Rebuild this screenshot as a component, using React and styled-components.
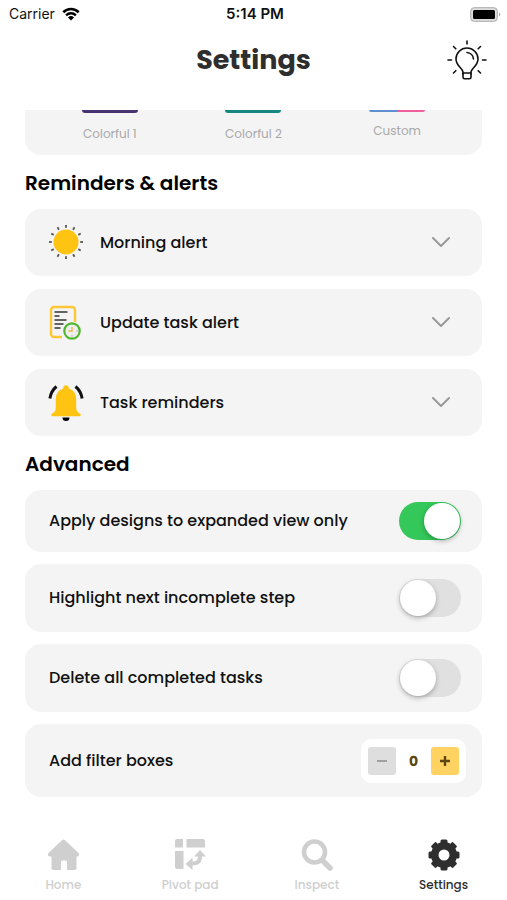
import React, { useState } from "react";
import styled, { createGlobalStyle } from "styled-components";

const GlobalStyle = createGlobalStyle`
  * {
    box-sizing: border-box;
  }
  body {
    margin: 0;
    background: #fff;
    color: #111;
    font-family: Poppins, Inter, sans-serif;
  }
  button {
    font-family: inherit;
    color: inherit;
    border: none;
    padding: 0;
    cursor: pointer;
  }
`;

const Page = styled.div`
  min-height: 100vh;
  display: flex;
  flex-direction: column;
`;

const StatusBar = styled.div`
  display: grid;
  grid-template-columns: 1fr auto 1fr;
  align-items: center;
  height: 28px;
  padding: 0 6px 0 9px;
  font-family: Inter, sans-serif;
  font-size: 14px;
  line-height: 20px;
`;

const Carrier = styled.div`
  display: flex;
  align-items: center;
  gap: 7px;
`;

const Time = styled.time`
  font-size: 15px;
  font-weight: 600;
`;

const Battery = styled.svg`
  justify-self: end;
`;

const Header = styled.header`
  display: grid;
  grid-template-columns: 40px 1fr 40px;
  align-items: center;
  height: 82px;
  padding: 0 20px 18px;
`;

const Title = styled.h1`
  grid-column: 2;
  margin: 0;
  text-align: center;
  font-size: 27px;
  line-height: 36px;
  font-weight: 700;
  color: #2e2e2e;
`;

const TipsButton = styled.button`
  background: none;
  height: 40px;
`;

const Content = styled.main`
  flex: 1;
  padding: 0 25px;
`;

const Themes = styled.div`
  display: grid;
  grid-template-columns: repeat(3, 1fr);
  height: 45px;
  padding: 0 13px;
  background: #f4f4f4;
  border-radius: 0 0 16px 16px;
`;

const Theme = styled.div`
  display: flex;
  flex-direction: column;
  align-items: center;
  gap: ${({ $raised }) => ($raised ? 10 : 12)}px;
  font-size: 12px;
  line-height: 18px;
  color: #a9a9a9;
`;

const Swatch = styled.div`
  width: 56px;
  height: ${({ $raised }) => ($raised ? 2 : 3)}px;
  border-radius: 0 0 8px 8px;
  background: ${({ $fill }) => $fill};
`;

const SectionTitle = styled.h2`
  margin: 14px 0 12px;
  font-size: 20px;
  line-height: 28px;
  font-weight: 600;
  color: #000;
`;

const Stack = styled.div`
  display: flex;
  flex-direction: column;
  gap: ${({ $gap }) => $gap}px;
`;

const AlertRow = styled.button`
  display: flex;
  align-items: center;
  gap: 16px;
  width: 100%;
  height: 67px;
  && {
    padding: 0 31px 0 23px;
  }
  background: #f4f4f4;
  border-radius: 16px;
  font-size: 16px;
  line-height: 24px;
  font-weight: 500;
  text-align: left;
`;

const RowText = styled.span`
  flex: 1;
`;

const OptionRow = styled.div`
  display: flex;
  align-items: center;
  justify-content: space-between;
  min-height: ${({ $height }) => $height}px;
  padding: 0 ${({ $inset }) => $inset}px 0 24px;
  background: #f4f4f4;
  border-radius: 16px;
  font-size: 16px;
  line-height: 24px;
  font-weight: 500;
`;

const Switch = styled.input`
  appearance: none;
  flex: none;
  width: 62px;
  height: 38px;
  margin: 0;
  padding: 1px;
  border-radius: 19px;
  background: #e0e0e0;
  display: flex;
  cursor: pointer;
  &::before {
    content: "";
    width: 36px;
    height: 36px;
    border-radius: 50%;
    background: #fff;
    box-shadow: 0 2px 5px rgba(0, 0, 0, 0.28);
  }
  &:checked {
    background: #34c759;
    justify-content: flex-end;
  }
`;

const Stepper = styled.div`
  display: flex;
  align-items: center;
  padding: 8px 7px;
  background: #fff;
  border-radius: 10px;
`;

const StepButton = styled.button`
  display: flex;
  align-items: center;
  justify-content: center;
  width: 28px;
  height: 28px;
  border-radius: 3px;
  background: ${({ $primary }) => ($primary ? "#ffd262" : "#dedede")};
  color: ${({ $primary }) => ($primary ? "#5c4712" : "#a0a0a0")};
`;

const Count = styled.output`
  width: 35px;
  text-align: center;
  font-size: 14px;
  font-weight: 700;
  color: #5c4712;
`;

const TabBar = styled.nav`
  display: grid;
  grid-template-columns: repeat(4, 1fr);
  padding: 23px 0 6px;
`;

const Tab = styled.a`
  display: flex;
  flex-direction: column;
  align-items: center;
  gap: 5px;
  font-size: 12px;
  line-height: 18px;
  font-weight: 500;
  text-decoration: none;
  color: ${({ $active }) => ($active ? "#2e2e2e" : "#cfcfcf")};
`;

const WifiIcon = () => (
  <svg width="18" height="14" viewBox="0 0 18 14">
    <path d="M1.3 5.2a11 11 0 0 1 15.4 0" fill="none" stroke="#000" strokeWidth="2.6" />
    <path d="M4.1 8.3a7 7 0 0 1 9.8 0" fill="none" stroke="#000" strokeWidth="2.4" />
    <path d="M9 13.6 6 10.5a4.3 4.3 0 0 1 6 0z" />
  </svg>
);

const BulbIcon = () => (
  <svg width="40" height="40" viewBox="0 0 40 40" fill="none" stroke="#111" strokeWidth="1.6" strokeLinecap="round" strokeLinejoin="round">
    <path d="M16 34v-2c0-3.5-7-6-7-13a11 11 0 0 1 22 0c0 7-7 9.5-7 13v2" />
    <path d="M16 33h8v4.2a1.5 1.5 0 0 1-1.5 1.5h-5a1.5 1.5 0 0 1-1.5-1.5z" />
    <path d="M20 12.5a7 7 0 0 1 6.5 6.5" />
    <path d="M20 1v3M1 20h3.5M35.5 20H39M6.5 6.5l2.3 2.3M33.5 6.5l-2.3 2.3M6.5 33l2.3-2.3M33.5 33l-2.3-2.3" />
  </svg>
);

const SunIcon = () => (
  <svg width="36" height="36" viewBox="0 0 36 36">
    <circle cx="18" cy="17" r="12.5" fill="#ffc411" />
    {[...Array(12)].map((_, i) => (
      <path key={i} d="M18 0v2.8" stroke="#555" strokeWidth="1.8" transform={`rotate(${i * 30} 18 17)`} />
    ))}
  </svg>
);

const TaskIcon = () => (
  <svg width="36" height="36" viewBox="0 0 36 36" fill="none">
    <path d="M14 32H6a3 3 0 0 1-3-3V5a3 3 0 0 1 3-3h18a3 3 0 0 1 3 3v12" stroke="#ffc736" strokeWidth="2.4" />
    <path d="M6.5 7h13M6.5 11h5M6.5 15h12M6.5 19h9M6.5 23h6" stroke="#333" strokeWidth="1.6" />
    <circle cx="24" cy="26" r="9.6" fill="#f4f4f4" />
    <circle cx="24" cy="26" r="7.7" fill="#eee" stroke="#51b72f" strokeWidth="2.2" />
    <path d="M24 22v4h-3.5" stroke="#f3b340" strokeWidth="1.3" />
    <path d="M28.5 26h1M24 30.5v1" stroke="#888" />
  </svg>
);

const BellIcon = () => (
  <svg width="36" height="36" viewBox="0 0 36 36">
    <path d="M18 .2a2.8 2.8 0 0 1 2.8 3.3c4.7 1.4 7.4 5.4 7.4 11v8c0 3.5 1.5 5 4.3 6.500.8 1.200 0 2.300-1.500 2.300H5c-1.5 0-2.3-1.1-1.5-2.3 2.8-1.5 4.3-3 4.3-6.5v-8c0-5.600 2.700-9.600 7.400-11A2.8 2.8 0 0 1 18 .2z" fill="#ffc411" />
    <path d="M14.500 32.500h7a3.500 3.500 0 0 1-7 0z" />
    <path d="M8.500 1.500Q3 6 1.900 13.500M27.500 1.500Q33 6 34.100 13.500" fill="none" stroke="#111" strokeWidth="3" />
  </svg>
);

const Chevron = () => (
  <svg width="20" height="12" viewBox="0 0 20 12">
    <path d="m2 1 8 8 8-8" fill="none" stroke="#999" strokeWidth="2" strokeLinecap="round" strokeLinejoin="round" />
  </svg>
);

const HomeIcon = () => (
  <svg width="32" height="32" viewBox="0 0 32 32" fill="currentColor">
    <path d="M15.200 1a2 2 0 0 1 2.600 0L31.500 14c1 1.400.4 3.500-1.200 3.500H29.500V29a2 2 0 0 1-2 2H20V23a1.500 1.500 0 0 0-1.500-1.500h-3a1.500 1.500 0 0 0-1.500 1.500v8H6.500a2 2 0 0 1-2-2V17.500H2.700c-1.600 0-2.200-2.100-1.200-3.500z" />
  </svg>
);

const PivotIcon = () => (
  <svg width="32" height="32" viewBox="0 0 32 32" fill="currentColor">
    <path d="M3 0h6v8.5H1V2a2 2 0 0 1 2-2zM12.5 0H29a2 2 0 0 1 2 2v6.5H12.5zM1 12h8.5v18H3a2 2 0 0 1-2-2z" />
    <path d="M26 11l6 6.5h-4c0 6-3 9-9.500 9v4.500L11.500 25l7-6.500v4c4 0 5.500-1.500 5.500-5h-4z" />
  </svg>
);

const SearchIcon = () => (
  <svg width="32" height="32" viewBox="0 0 32 32" fill="none" stroke="currentColor">
    <circle cx="13.5" cy="13" r="10.5" strokeWidth="4.6" />
    <path d="m21.5 21.5 7.500 7.500" strokeWidth="5.5" strokeLinecap="round" />
  </svg>
);

const GearIcon = () => (
  <svg width="32" height="32" viewBox="0 0 32 32">
    <g fill="currentColor">
      {[0, 45, 90, 135].map((angle) => (
        <rect key={angle} x="12.5" y="0.5" width="7" height="31" rx="1.5" transform={`rotate(${angle} 16 16)`} />
      ))}
      <circle cx="16" cy="16" r="13" />
    </g>
    <circle cx="16" cy="16" r="5.5" fill="#fff" />
  </svg>
);

const themes = [
  { name: "Colorful 1", fill: "#47336f" },
  { name: "Colorful 2", fill: "#16877f" },
  { name: "Custom", fill: "linear-gradient(90deg, #5e8fd0 50%, #ef5f9c 50%)", raised: true },
];

const alerts = [
  { name: "Morning alert", Icon: SunIcon },
  { name: "Update task alert", Icon: TaskIcon },
  { name: "Task reminders", Icon: BellIcon },
];

const tabs = [
  { name: "Home", Icon: HomeIcon },
  { name: "Pivot pad", Icon: PivotIcon },
  { name: "Inspect", Icon: SearchIcon },
  { name: "Settings", Icon: GearIcon, active: true },
];

const App = () => {
  const [options, setOptions] = useState({ expanded: true, highlight: false, remove: false });
  const [filters, setFilters] = useState(0);

  const handleToggle = (e) => {
    setOptions({ ...options, [e.target.id]: e.target.checked });
  };

  return (
    <Page>
      <GlobalStyle />
      <StatusBar>
        <Carrier>
          Carrier <WifiIcon />
        </Carrier>
        <Time>5:14 PM</Time>
        <Battery width="31" height="15" viewBox="0 0 31 15">
          <rect x="0.7" y="0.7" width="26.6" height="13.6" rx="3.5" fill="#ddd" stroke="#aaa" />
          <rect x="3" y="3" width="22" height="9" rx="1.5" />
          <path d="M29 5.5a2.2 2.2 0 0 1 0 4z" fill="#aaa" />
        </Battery>
      </StatusBar>
      <Header>
        <Title>Settings</Title>
        <TipsButton aria-label="Tips">
          <BulbIcon />
        </TipsButton>
      </Header>
      <Content>
        <Themes>
          {themes.map(({ name, fill, raised }) => (
            <Theme key={name} $raised={raised}>
              <Swatch $fill={fill} $raised={raised} />
              {name}
            </Theme>
          ))}
        </Themes>

        <SectionTitle>Reminders &amp; alerts</SectionTitle>
        <Stack $gap={13}>
          {alerts.map(({ name, Icon }) => (
            <AlertRow key={name}>
              <Icon />
              <RowText>{name}</RowText>
              <Chevron />
            </AlertRow>
          ))}
        </Stack>

        <SectionTitle>Advanced</SectionTitle>
        <Stack $gap={12}>
          <OptionRow $height={62} $inset={21}>
            <label htmlFor="expanded">Apply designs to expanded view only</label>
            <Switch type="checkbox" id="expanded" checked={options.expanded} onChange={handleToggle} />
          </OptionRow>
          <OptionRow $height={68} $inset={21}>
            <label htmlFor="highlight">Highlight next incomplete step</label>
            <Switch type="checkbox" id="highlight" checked={options.highlight} onChange={handleToggle} />
          </OptionRow>
          <OptionRow $height={68} $inset={21}>
            <label htmlFor="remove">Delete all completed tasks</label>
            <Switch type="checkbox" id="remove" checked={options.remove} onChange={handleToggle} />
          </OptionRow>
          <OptionRow $height={73} $inset={16}>
            <span id="filters">Add filter boxes</span>
            <Stepper role="group" aria-labelledby="filters">
              <StepButton aria-label="Remove" onClick={() => setFilters(Math.max(0, filters - 1))}>
                <svg width="10" height="10" viewBox="0 0 10 10">
                  <path d="M0 5h10" stroke="currentColor" strokeWidth="2" />
                </svg>
              </StepButton>
              <Count>{filters}</Count>
              <StepButton $primary aria-label="Add" onClick={() => setFilters(filters + 1)}>
                <svg width="10" height="10" viewBox="0 0 10 10">
                  <path d="M0 5h10M5 0v10" stroke="currentColor" strokeWidth="2.4" />
                </svg>
              </StepButton>
            </Stepper>
          </OptionRow>
        </Stack>
      </Content>
      <TabBar>
        {tabs.map(({ name, Icon, active }) => (
          <Tab key={name} href="#" $active={active}>
            <Icon />
            {name}
          </Tab>
        ))}
      </TabBar>
    </Page>
  );
};

export default App;
